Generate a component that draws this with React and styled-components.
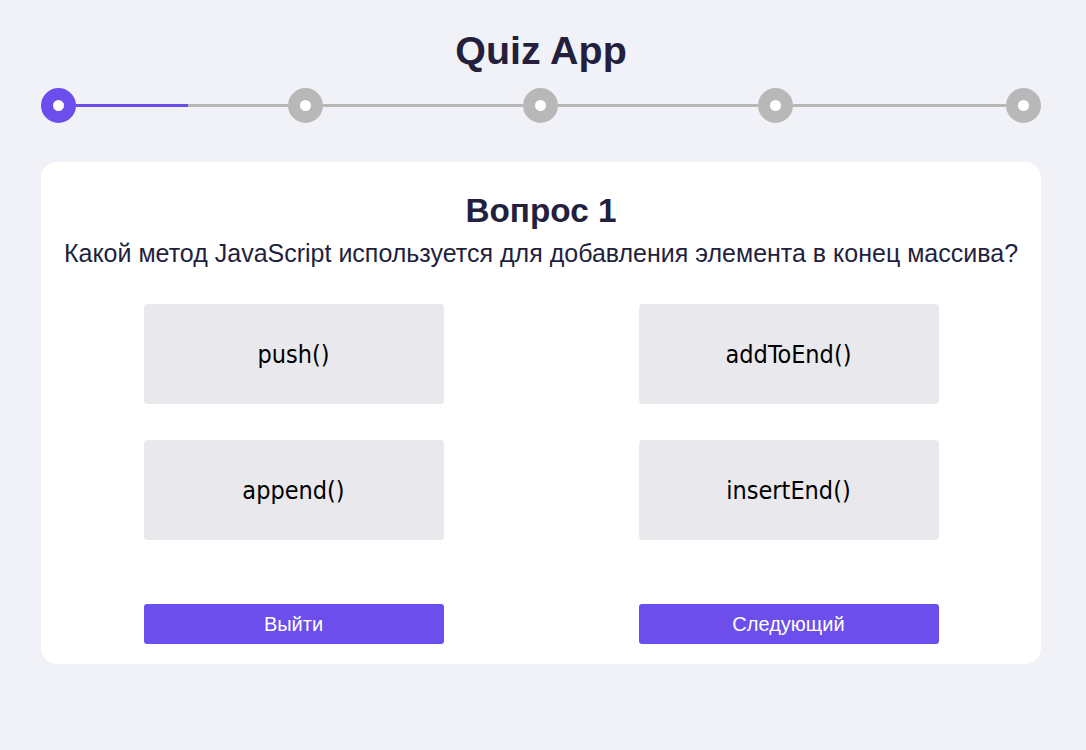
import React from 'react';
import styled, { createGlobalStyle } from 'styled-components';

const GlobalStyle = createGlobalStyle`
  body {
    margin: 0;
    background: #f1f2f7;
    font-family: "Liberation Sans", Arial, sans-serif;
  }
`;

const Page = styled.div`
  width: 1000px;
  padding: 28px 45px 40px 41px;
`;

const Title = styled.h1`
  margin: 0;
  text-align: center;
  font-size: 39.4px;
  line-height: 44px;
  font-weight: 700;
  color: #231f3d;
`;

const Steps = styled.div`
  display: grid;
  grid-template-columns: 35px 212px 35px 200px 35px 200px 35px 213px 35px;
  align-items: center;
  margin-top: 16px;
`;

const Dot = styled.div`
  width: 35px;
  height: 35px;
  box-sizing: border-box;
  border-radius: 50%;
  border: 12px solid ${p => (p.active ? '#6b4eeb' : '#b8b8b8')};
  background: #fff;
`;

const Track = styled.div`
  height: 3px;
  background: #b8b8b8;
`;

const Fill = styled.div`
  height: 100%;
  background: #6b4eeb;
`;

const Card = styled.div`
  margin-top: 39px;
  background: #fff;
  border-radius: 16px;
  padding: 30px 0 20px;
  text-align: center;
`;

const Heading = styled.h2`
  margin: 0;
  font-size: 33.3px;
  line-height: 37px;
  font-weight: 700;
  color: #231f3d;
`;

const Question = styled.p`
  margin: 12px 0 0;
  font-size: 25px;
  line-height: 25px;
  color: #231f3d;
`;

const Options = styled.div`
  display: grid;
  grid-template-columns: 300px 300px;
  justify-content: center;
  column-gap: 195px;
  row-gap: 36px;
  margin-top: 38px;
`;

const Option = styled.button`
  height: 100px;
  border: none;
  border-radius: 4px;
  background: #e8e8ed;
  color: #000;
  font-family: "DejaVu Sans Condensed", "DejaVu Sans", sans-serif;
  font-size: 25px;
  cursor: pointer;
`;

const Actions = styled.div`
  display: grid;
  grid-template-columns: 300px 300px;
  justify-content: center;
  column-gap: 195px;
  margin-top: 64px;
`;

const ActionButton = styled.button`
  height: 40px;
  border: none;
  border-radius: 3px;
  background: #6b4eeb;
  color: #fff;
  font-family: "Liberation Sans", Arial, sans-serif;
  font-size: 20px;
  cursor: pointer;
`;

const answers = ['push()', 'addToEnd()', 'append()', 'insertEnd()'];

export default function App() {
  return (
    <>
      <GlobalStyle />
      <Page>
        <Title>Quiz App</Title>
        <Steps>
          <Dot active />
          <Track><Fill style={{ width: '53%' }} /></Track>
          <Dot />
          <Track />
          <Dot />
          <Track />
          <Dot />
          <Track />
          <Dot />
        </Steps>
        <Card>
          <Heading>Вопрос 1</Heading>
          <Question>Какой метод JavaScript используется для добавления элемента в конец массива?</Question>
          <Options>
            {answers.map(a => <Option key={a}>{a}</Option>)}
          </Options>
          <Actions>
            <ActionButton>Выйти</ActionButton>
            <ActionButton>Следующий</ActionButton>
          </Actions>
        </Card>
      </Page>
    </>
  );
}
